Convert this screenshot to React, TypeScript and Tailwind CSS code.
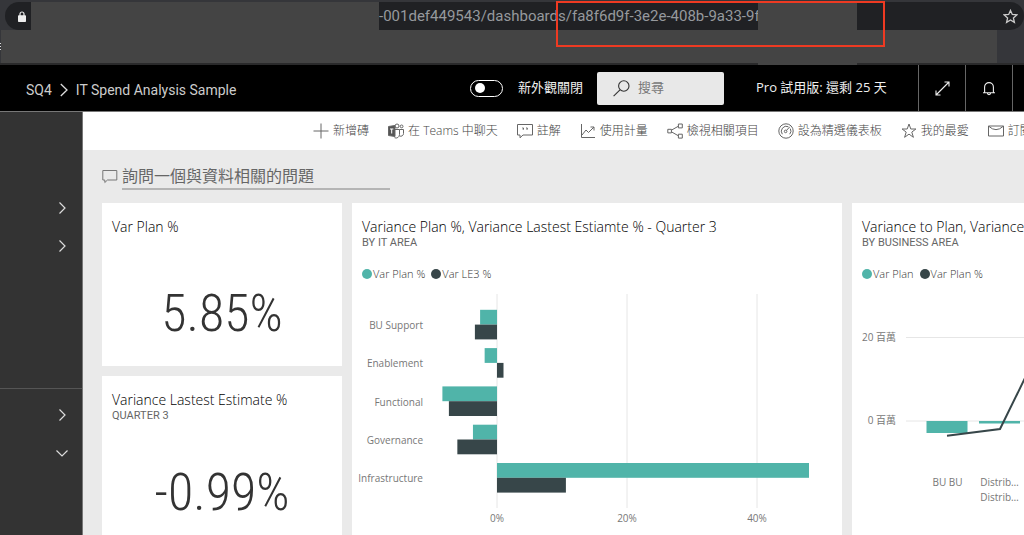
import React from "react";

const TEAL = "#50b4a9";
const DARK = "#374649";

const actions = [
  { label: "新增磚", icon: <path d="M8 .5v15M.5 8h15" /> },
  {
    label: "在 Teams 中聊天",
    icon: (
      <>
        <path d="M.5 3.5l6.5-1v11l-6.5-1z" fill="#555" />
        <path d="M2 6h3.4M3.7 6v4.5" stroke="#fff" />
        <circle cx="9" cy="3" r="2" />
        <circle cx="13.6" cy="3.4" r="1.4" />
        <path d="M7 6.5h4.5v5a3.5 3.5 0 0 1-5 3.2M11.5 6.5h4v4a2.7 2.7 0 0 1-4 2.4" />
      </>
    ),
  },
  {
    label: "註解",
    icon: (
      <>
        <path d="M.5 1.5h15v10.500H6l-3 2.800V12H.5z" />
        <path d="M5.200 5h1.300v1.200l-.8.8M9 5h1.300v1.200l-.8.8" />
      </>
    ),
  },
  {
    label: "使用計量",
    icon: <path d="M1.500 1v13.500H15M2 12l4-5 2.500 2.500L14 4M10.500 4H14v3.500" />,
  },
  {
    label: "檢視相關項目",
    icon: (
      <path d="M.8 6.300h3.600v3.600H.8zM11.400 1h3.900v3.900h-3.900zM11.400 11.200h3.900v3.900h-3.900zM4.400 7.200l7-4M4.400 8.800l7 4" />
    ),
  },
  {
    label: "設為精選儀表板",
    icon: (
      <>
        <circle cx="8" cy="8" r="7.2" />
        <path d="M4.300 11.200A5 5 0 0 1 10.400 3.700M12.300 5.600a5 5 0 0 1-.6 5.600" />
        <circle cx="7.6" cy="8.4" r="1.3" />
        <path d="M8.500 7.400l3.300-3.600" />
      </>
    ),
  },
  {
    label: "我的最愛",
    icon: <path d="M8 1l1.800 5h5.100l-4.100 3.100 1.600 5.200L8 11.100l-4.400 3.200 1.600-5.200L1.100 6h5.100z" />,
  },
  {
    label: "訂閱",
    icon: <path d="M.5 3h15v10H.5zM.8 3.300Q8 10 15.200 3.300" />,
  },
];

const areas = [
  { name: "BU Support", plan: -2.6, le3: -3.4 },
  { name: "Enablement", plan: -1.9, le3: 1 },
  { name: "Functional", plan: -8.4, le3: -7.4 },
  { name: "Governance", plan: -3.7, le3: -6.1 },
  { name: "Infrastructure", plan: 48, le3: 10.6 },
];

function Chevron({ down = false }: { down?: boolean }) {
  return (
    <svg width="12" height="12" viewBox="0 0 12 12" fill="none" stroke="#ddd" strokeWidth="1.2">
      <path d={down ? "M.5 3.5L6 9l5.5-5.5" : "M3.5.5L9 6l-5.5 5.5"} />
    </svg>
  );
}

function BrowserBar() {
  return (
    <div className="relative flex h-[65px] flex-col bg-[#35363a] pt-[2px]">
      <div className="flex h-7 pl-[5px]">
        <div className="flex w-[26px] shrink-0 items-center rounded-l-full bg-[#202124] pl-[13px]">
          <svg width="8" height="11" viewBox="0 0 8 11" fill="none">
            <path d="M2 5V3a2 2 0 0 1 4 0v2" stroke="#eee" strokeWidth="1.2" />
            <rect y="4.2" width="8" height="6.8" rx=".8" fill="#eee" />
          </svg>
        </div>
        <div className="w-[348px] shrink-0 bg-[#444]" />
        <div className="w-[379px] shrink-0 overflow-hidden whitespace-nowrap bg-[#202124] font-['Roboto',sans-serif] text-[15px] leading-7 text-[#96999d]">
          -001def449543/dashboards/fa8f6d9f-3e2e-408b-9a33-9f
        </div>
        <div className="w-[99px] shrink-0 bg-[#444]" />
        <div className="flex flex-1 items-center justify-end rounded-r-full bg-[#202124] pr-[6px]">
          <button type="button" aria-label="加入書籤">
            <svg width="15" height="15" viewBox="0 0 15 15" fill="none" stroke="#ccc" strokeWidth="1.3">
              <path d="M7.5 1.4l1.8 4.1 4.5.4-3.4 3 1 4.4-3.9-2.3-3.9 2.3 1-4.4-3.4-3 4.5-.4z" />
            </svg>
          </button>
        </div>
      </div>
      <div className="flex h-[33px] items-center pr-[27px]">
        <svg width="1" height="8" viewBox="0 0 1 8" stroke="#ddd">
          <path d="M0 .5h1M0 3.5h1M0 6.5h1" />
        </svg>
        <div className="h-full flex-1 bg-[#444]" />
      </div>
      <div className="flex h-[2px] bg-[#2a2a2b]">
        <div className="ml-[758px] w-[99px] bg-[#444]" />
      </div>
      <div className="absolute left-[556px] top-px h-[46px] w-[329px] border-2 border-[#ee3a22]" />
    </div>
  );
}

function Header() {
  return (
    <header className="flex h-[47px] items-center whitespace-nowrap border-b border-[#777] bg-black text-[13px] text-[#f0f0f0]">
      <nav className="flex items-center gap-2 pl-[26px] pt-1 font-['Roboto',sans-serif] text-sm text-[#ccc]">
        <a href="#">SQ4</a>
        <svg width="8" height="14" viewBox="0 0 8 14" fill="none" stroke="#ddd" strokeWidth="1.3">
          <path d="M.8 1L7 7 .8 13" />
        </svg>
        <a href="#">IT Spend Analysis Sample</a>
      </nav>
      <div className="ml-auto flex h-full shrink-0 items-center">
        <label className="flex items-center gap-[15px]">
          <input
            type="checkbox"
            role="switch"
            className="flex h-[17px] w-[33px] appearance-none items-center rounded-full border border-white pl-1 before:size-[10px] before:rounded-full before:bg-white"
          />
          新外觀關閉
        </label>
        <label className="ml-[14px] flex h-[33px] w-[127px] items-center gap-2 rounded-xs bg-[#e8e8e8] pl-4">
          <svg width="17" height="17" viewBox="0 0 17 17" fill="none" stroke="#333" strokeWidth="1.1" className="shrink-0">
            <circle cx="10.8" cy="6" r="5.2" />
            <path d="M7 9.8L.6 16.2" />
          </svg>
          <input
            type="text"
            aria-label="搜尋"
            placeholder="搜尋"
            className="w-full min-w-0 bg-transparent text-[13px] outline-none placeholder:text-[#777]"
          />
        </label>
        <span className="ml-8 w-[162px]">Pro 試用版: 還剩 25 天</span>
        <button type="button" aria-label="全螢幕" className="flex h-full w-[47px] items-center justify-center border-l border-[#666]">
          <svg width="15" height="15" viewBox="0 0 15 15" fill="none" stroke="#eee" strokeWidth="1.1">
            <path d="M1 14L14 1M9.5 1H14v4.5M1 9.5V14h4.5" />
          </svg>
        </button>
        <button type="button" aria-label="通知" className="flex h-full w-[47px] items-center justify-center border-l border-[#666]">
          <svg width="14" height="15" viewBox="0 0 14 15" fill="none" stroke="#eee" strokeWidth="1.1">
            <path d="M1 11.8h12M2.6 11.6V6a4.4 4.4 0 0 1 8.8 0v5.6M5.4 12a1.6 1.6 0 0 0 3.2 0" />
          </svg>
        </button>
        <div className="h-full w-3 border-l border-[#666]" />
      </div>
    </header>
  );
}

function Sidebar() {
  return (
    <aside className="flex w-[83px] shrink-0 flex-col border-r border-[#777] bg-[#333] pt-[77px]">
      <button type="button" aria-label="展開" className="flex h-[38px] items-center justify-end pr-3.5">
        <Chevron />
      </button>
      <button type="button" aria-label="展開" className="flex h-[38px] items-center justify-end pr-3.5">
        <Chevron />
      </button>
      <div className="mt-[123px] flex flex-col border-t border-[#555] pt-[7px]">
        <button type="button" aria-label="展開" className="flex h-[38px] items-center justify-end pr-3.5">
          <Chevron />
        </button>
        <button type="button" aria-label="收合" className="flex h-[38px] items-center justify-end pr-3.5">
          <Chevron down />
        </button>
      </div>
    </aside>
  );
}

function Tile({
  title,
  subtitle,
  className = "",
  children,
}: {
  title: string;
  subtitle?: string;
  className?: string;
  children: React.ReactNode;
}) {
  return (
    <section className={`flex flex-col bg-white pt-[14px] ${className}`}>
      <h2 className="whitespace-nowrap px-[10px] text-sm font-light leading-5 text-black">{title}</h2>
      {subtitle && (
        <p className="px-[10px] font-['Roboto',sans-serif] text-[11px] leading-3 text-[#666]">{subtitle}</p>
      )}
      {children}
    </section>
  );
}

function BigNumber({ children }: { children: React.ReactNode }) {
  return (
    <p className="flex flex-1 items-center justify-center pt-6 font-['Roboto_Condensed_Light','Roboto_Condensed',sans-serif] text-[52px] font-light leading-[60px] text-[#333]">
      {children}
    </p>
  );
}

function Legend({ items }: { items: string[] }) {
  return (
    <ul className="flex gap-1.5 whitespace-nowrap px-[10px] pt-[17px] text-[11px] font-light leading-4 text-[#333]">
      {items.map((item, i) => (
        <li key={item} className="flex items-center gap-px">
          <span className={`size-[10px] rounded-full ${i === 0 ? "bg-[#50b4a9]" : "bg-[#374649]"}`} />
          {item}
        </li>
      ))}
    </ul>
  );
}

function AreaChart() {
  const zero = 145;
  const unit = 6.5;
  const bar = (value: number, y: number, fill: string) => (
    <rect
      x={value < 0 ? zero + value * unit : zero}
      y={y}
      width={Math.abs(value) * unit}
      height="14.8"
      fill={fill}
    />
  );
  return (
    <svg width="490" height="246" viewBox="0 0 490 246" className="mt-2 text-[10px]" fill="#777">
      {[0, 20, 40].map((tick) => (
        <g key={tick}>
          <path d={`M${zero + tick * unit} 4v214`} stroke="#e6e6e6" />
          <text x={zero + tick * unit} y="232" textAnchor="middle">
            {tick}%
          </text>
        </g>
      ))}
      {areas.map((area, i) => (
        <g key={area.name}>
          <text x="71" y={39 + i * 38.3} textAnchor="end">
            {area.name}
          </text>
          {bar(area.plan, 19.8 + i * 38.3, TEAL)}
          {bar(area.le3, 34.6 + i * 38.3, DARK)}
        </g>
      ))}
    </svg>
  );
}

function BusinessChart() {
  return (
    <svg width="490" height="246" viewBox="0 0 490 246" className="mt-2 text-[10px]" fill="#777">
      <path d="M54 47.5h426M54 131h426" stroke="#e6e6e6" />
      <text x="44" y="51" textAnchor="end">20 百萬</text>
      <text x="44" y="134" textAnchor="end">0 百萬</text>
      <rect x="74.5" y="131" width="41" height="12" fill={TEAL} />
      <rect x="127" y="131" width="41" height="2.5" fill={TEAL} />
      <path d="M95 145.7L148 139l53-108" fill="none" stroke={DARK} strokeWidth="2" />
      <text x="95.5" y="196" textAnchor="middle">BU BU</text>
      <text x="147.5" y="196" textAnchor="middle">Distrib…</text>
      <text x="147.5" y="211" textAnchor="middle">Distrib…</text>
    </svg>
  );
}

export default function App() {
  return (
    <div className="flex h-screen flex-col overflow-hidden font-['Open_Sans','Noto_Sans_CJK_TC',sans-serif]">
      <BrowserBar />
      <Header />
      <div className="flex min-h-0 flex-1">
        <Sidebar />
        <main className="min-w-0 flex-1 overflow-hidden bg-[#eaeaea]">
          <div className="flex h-[38px] items-center gap-[19px] overflow-hidden bg-white pl-[230px]">
            {actions.map((action) => (
              <button
                key={action.label}
                type="button"
                className="flex shrink-0 items-center gap-1 whitespace-nowrap text-xs font-light text-[#444]"
              >
                <svg width="16" height="16" viewBox="0 0 16 16" fill="none" stroke="#666">
                  {action.icon}
                </svg>
                {action.label}
              </button>
            ))}
          </div>
          <label className="flex h-[53px] items-start gap-1 pl-[19px] pt-[13px]">
            <svg width="16" height="16" viewBox="0 0 16 16" fill="none" stroke="#777" className="mt-1.5">
              <path d="M.8 1.5h14V11H5.5l-2.7 2.5V11h-2z" />
            </svg>
            <input
              type="text"
              aria-label="詢問一個與資料相關的問題"
              placeholder="詢問一個與資料相關的問題"
              className="h-[27px] w-[268px] border-b-2 border-[#b5b5b5] bg-transparent text-base leading-6 outline-none placeholder:text-[#666]"
            />
          </label>
          <div className="grid grid-cols-[240px_490px_490px] grid-rows-[163px_163px] gap-[10px] pl-[19px]">
            <Tile title="Var Plan %">
              <BigNumber>5.85%</BigNumber>
            </Tile>
            <Tile
              title="Variance Plan %, Variance Lastest Estiamte % - Quarter 3"
              subtitle="BY IT AREA"
              className="row-span-2"
            >
              <Legend items={["Var Plan %", "Var LE3 %"]} />
              <AreaChart />
            </Tile>
            <Tile title="Variance to Plan, Variance Plan %" subtitle="BY BUSINESS AREA" className="row-span-2">
              <Legend items={["Var Plan", "Var Plan %"]} />
              <BusinessChart />
            </Tile>
            <Tile title="Variance Lastest Estimate %" subtitle="QUARTER 3">
              <BigNumber>-0.99%</BigNumber>
            </Tile>
          </div>
        </main>
      </div>
    </div>
  );
}
